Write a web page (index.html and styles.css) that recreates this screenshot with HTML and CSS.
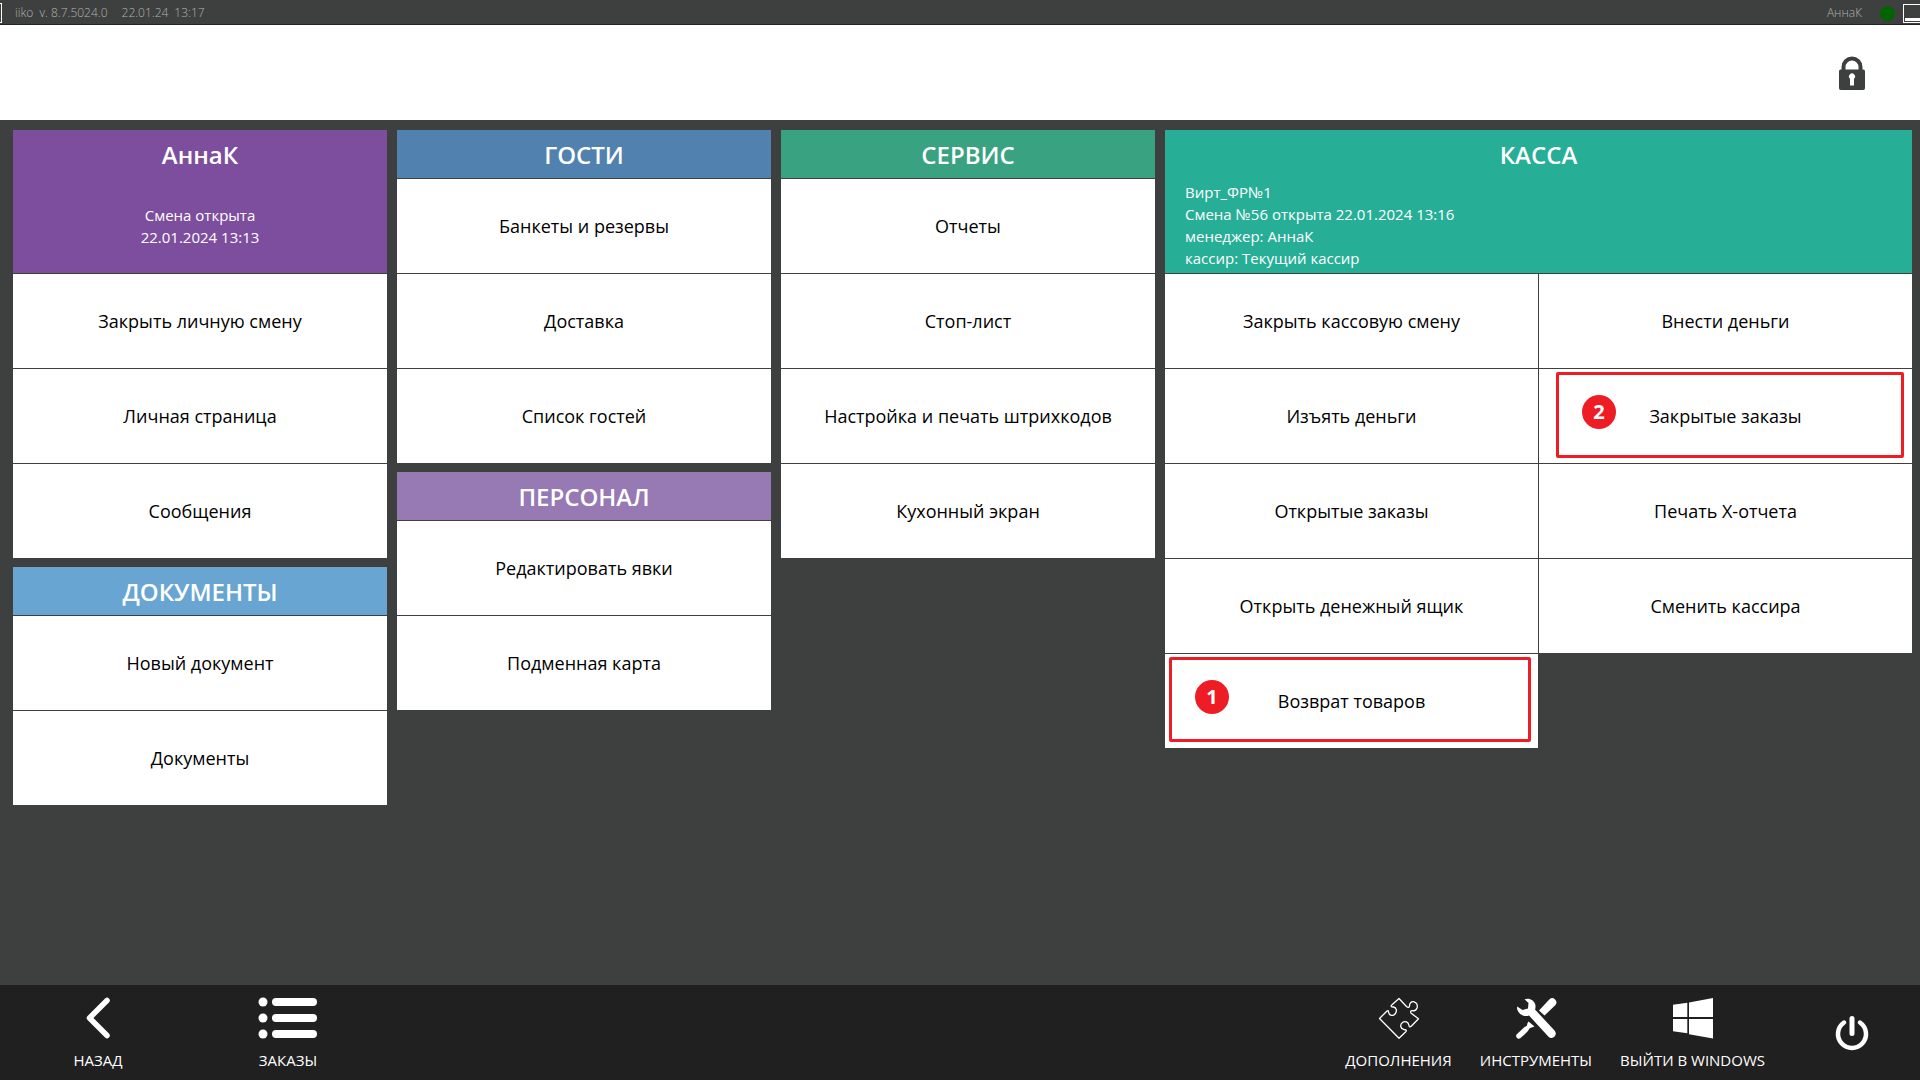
FILE: index.html
```html
<!DOCTYPE html>
<html lang="ru">
<head>
<meta charset="utf-8">
<meta name="viewport" content="width=device-width, initial-scale=1">
<title>iiko</title>
<link rel="stylesheet" href="styles.css">
</head>
<body>
<header class="statusbar">
  <span class="edge-mark"></span>
  <span class="version">iiko&nbsp; v. 8.7.5024.0</span>
  <span class="date">22.01.24</span>
  <span class="time">13:17</span>
  <span class="user">АннаК</span>
  <span class="online-dot"></span>
  <button class="minimize" type="button" aria-label="Свернуть"></button>
</header>
<div class="toolbar">
  <button class="lock" type="button" aria-label="Заблокировать">
    <svg width="26" height="34" viewBox="0 0 26 34" fill="#3e403f" fill-rule="evenodd"><path d="M2.5 13.5V11a10.5 10.5 0 0 1 21 0v2.500h.8a1.700 1.700 0 0 1 1.700 1.700v17.100a1.700 1.700 0 0 1-1.700 1.700H1.700A1.700 1.700 0 0 1 0 32.300V15.200a1.700 1.700 0 0 1 1.700-1.700zM6.500 13.500h13V11a6.500 6.500 0 0 0-13 0zM11 29.500h4v-6.800a3 3 0 1 0-4 0z"/></svg>
  </button>
</div>
<main class="board">
  <div class="column">
    <section class="card">
      <div class="head head-tall violet">
        <h2>АннаК</h2>
        <p class="shift">Смена открыта<br>22.01.2024 13:13</p>
      </div>
      <button type="button">Закрыть личную смену</button>
      <button type="button">Личная страница</button>
      <button type="button">Сообщения</button>
    </section>
    <section class="card">
      <div class="head sky"><h2>ДОКУМЕНТЫ</h2></div>
      <button type="button">Новый документ</button>
      <button type="button">Документы</button>
    </section>
  </div>
  <div class="column">
    <section class="card">
      <div class="head blue"><h2>ГОСТИ</h2></div>
      <button type="button">Банкеты и резервы</button>
      <button type="button">Доставка</button>
      <button type="button">Список гостей</button>
    </section>
    <section class="card">
      <div class="head lilac"><h2>ПЕРСОНАЛ</h2></div>
      <button type="button">Редактировать явки</button>
      <button type="button">Подменная карта</button>
    </section>
  </div>
  <div class="column">
    <section class="card">
      <div class="head green"><h2>СЕРВИС</h2></div>
      <button type="button">Отчеты</button>
      <button type="button">Стоп-лист</button>
      <button type="button">Настройка и печать штрихкодов</button>
      <button type="button">Кухонный экран</button>
    </section>
  </div>
  <div class="column">
    <section class="card card-wide">
      <div class="head head-tall teal">
        <h2>КАССА</h2>
        <p class="register">Вирт_ФР№1<br>Смена №56 открыта 22.01.2024 13:16<br>менеджер: АннаК<br>кассир: Текущий кассир</p>
      </div>
      <button type="button">Закрыть кассовую смену</button>
      <button type="button">Внести деньги</button>
      <button type="button">Изъять деньги</button>
      <button type="button">Закрытые заказы<span class="frame frame-two"><span class="step">2</span></span></button>
      <button type="button">Открытые заказы</button>
      <button type="button">Печать X-отчета</button>
      <button type="button">Открыть денежный ящик</button>
      <button type="button">Сменить кассира</button>
      <button type="button">Возврат товаров<span class="frame frame-one"><span class="step">1</span></span></button>
    </section>
  </div>
</main>
<footer class="dock">
  <button class="dock-left" type="button">
    <svg width="60" height="42" viewBox="0 0 60 42" fill="none" stroke="#fff" stroke-width="5.500" stroke-linecap="round" stroke-linejoin="round"><path d="M39 3.500 21.500 21 39 38.500"/></svg>
    <span>НАЗАД</span>
  </button>
  <button class="dock-left" type="button">
    <svg width="60" height="42" viewBox="0 0 60 42" fill="#fff"><circle cx="5" cy="5" r="4.500"/><circle cx="5" cy="21" r="4.500"/><circle cx="5" cy="37" r="4.500"/><rect x="14" y="1" width="45" height="8" rx="4"/><rect x="14" y="17" width="45" height="8" rx="4"/><rect x="14" y="33" width="45" height="8" rx="4"/></svg>
    <span>ЗАКАЗЫ</span>
  </button>
  <button class="dock-right push" type="button">
    <svg width="42" height="42" viewBox="0 0 42 42" fill="none" stroke="#fff" stroke-width="1.300" stroke-linejoin="round"><path d="M21 1.500 28.500 9.500C30 11 31.500 10.500 31.500 9 31.500 6 33.500 4.300 36 4.800 39 5.500 39.800 8.500 39 11 38 13.500 36 14 34.500 13.600 32.800 13.300 32 15 33.200 16.200L40.500 21.800 33.500 29C32 30.500 31 30 31 28.500 30.500 25 27 23.500 24.500 25.500 21.500 28 22.500 32 26 32.500 28.500 32.700 29 33.500 27.500 35L21 41.200 1.500 21.500 8.500 14.500C10 13 10.500 13.500 10.500 15.200 11 18.500 15 19.500 17 17 19.500 14 18.500 10.500 15.500 10 13 9.800 12.500 9 14 7.800Z"/></svg>
    <span>ДОПОЛНЕНИЯ</span>
  </button>
  <button class="dock-right" type="button">
    <svg width="42" height="42" viewBox="0 0 42 42" fill="#fff"><path d="M24 13.500 34.500 2.200a4.200 4.200 0 0 1 6 5.800L29.500 18.500z"/><path d="M9.500 2.300C14 .5 19 3 20.300 7.500 20.700 9.500 20.500 11.500 20 12.500L39.500 33.500a4.200 4.200 0 0 1-6 6.200L14 18.500C9 20.500 3 17 2 11.500L2.200 9.500 7.500 13 13 11.500 13.500 6z"/><path d="M13.500 24.500 19.500 29.500 16.500 30.500 14.300 31.500C14 33 12 35 9.500 37.500L5.500 41C3.500 43 0 40.500 1.500 37.500L9 30.500C10 29.500 11.300 29.300 12 28.800L12.300 26.500z"/></svg>
    <span>ИНСТРУМЕНТЫ</span>
  </button>
  <button class="dock-right" type="button">
    <svg width="42" height="42" viewBox="0 0 42 42" fill="#fff"><path d="M1 7.800 15.300 5.700V20H1zM17 5.400 41 1v19H17zM1 22h14.300v14.300L1 34.200zM17 22h24v19.500L17 37.200z"/></svg>
    <span>ВЫЙТИ В WINDOWS</span>
  </button>
  <button class="power" type="button" aria-label="Выключить">
    <svg width="34" height="36" viewBox="0 0 34 36" fill="none" stroke="#fff" stroke-linecap="round"><path stroke-width="5" d="M17 3.500V18.500"/><path stroke-width="4.500" d="M9 7.500A14 14 0 1 0 25 7.500"/></svg>
  </button>
</footer>
</body>
</html>
```
FILE: styles.css
```css
* {
  box-sizing: border-box;
}

body {
  margin: 0;
  min-height: 100vh;
  display: flex;
  flex-direction: column;
  background: #3e403f;
  color: #000;
  font-family: "Open Sans", "Noto Sans", sans-serif;
  overflow-x: hidden;
}

button {
  margin: 0;
  padding: 0;
  border: 0;
  background: none;
  color: inherit;
  font: inherit;
  cursor: pointer;
}

/* Status bar */
.statusbar {
  display: flex;
  align-items: center;
  height: 25px;
  padding-top: 2px;
  border-bottom: 1px solid #222;
  color: #b0b0b0;
  font-size: 12px;
  font-weight: 300;
  line-height: 16px;
  white-space: nowrap;
  overflow: hidden;
}

.edge-mark {
  width: 2px;
  height: 20px;
  margin-right: 13px;
  border: 1px solid #fff;
  border-left: 0;
}

.date {
  margin-left: 14px;
}

.time {
  margin-left: 6px;
}

.user {
  margin-left: auto;
}

.online-dot {
  width: 15px;
  height: 15px;
  margin: 0 8px 0 18px;
  border-radius: 50%;
  background: #006400;
}

.minimize {
  width: 17px;
  height: 19px;
  border: 1px solid #fff;
  border-right: 0;
  background: linear-gradient(#fff, #fff) 1px 13px / 15px 3px no-repeat;
}

/* Toolbar */
.toolbar {
  display: flex;
  align-items: center;
  justify-content: flex-end;
  height: 95px;
  padding-right: 55px;
  background: #fff;
}

.lock {
  display: flex;
}

/* Board */
.board {
  flex: 1;
  display: grid;
  grid-template-columns: 374fr 374fr 374fr 747fr;
  gap: 10px;
  align-items: start;
  padding: 10px 8px 10px 13px;
}

.column {
  display: flex;
  flex-direction: column;
  gap: 9px;
}

.card {
  display: grid;
  gap: 1px;
}

.card-wide {
  grid-template-columns: 1fr 1fr;
}

.card button {
  position: relative;
  height: 94px;
  background: #fff;
  font-size: 18px;
  line-height: 24px;
}

.head {
  height: 48px;
  padding-top: 9px;
  color: #fff;
  text-align: center;
}

.head-tall {
  height: 143px;
}

.card-wide .head {
  grid-column: 1 / -1;
}

.head h2 {
  margin: 0;
  font-size: 24px;
  font-weight: 600;
  line-height: 32px;
}

.head p {
  margin: 0;
  font-size: 15px;
  line-height: 22px;
}

.head .shift {
  padding-top: 33px;
}

.head .register {
  padding: 10px 20px 0;
  text-align: left;
}

.violet { background: #7d4e9d; }
.sky { background: #68a5d3; }
.blue { background: #5181ae; }
.lilac { background: #9779b3; }
.green { background: #38a281; }
.teal { background: #27ae96; }

/* Step markers over the buttons */
.frame {
  position: absolute;
  border: 3px solid #ee1c25;
  border-radius: 2px;
}

.frame-one {
  inset: 3px 7px 6px 4px;
}

.frame-two {
  inset: 3px 8px 5px 17px;
}

.step {
  position: absolute;
  top: 20px;
  left: 23px;
  width: 34px;
  height: 34px;
  border-radius: 50%;
  background: #ee1c25;
  color: #fff;
  font-size: 20px;
  font-weight: 700;
  line-height: 34px;
}

/* Bottom dock */
.dock {
  display: flex;
  height: 95px;
  padding-left: 3px;
  background: #202020;
  color: #fff;
  font-size: 15px;
  line-height: 20px;
}

.dock button {
  display: flex;
  flex-direction: column;
  align-items: center;
  gap: 11px;
  padding-top: 12px;
  white-space: nowrap;
}

.dock .dock-left {
  width: 190px;
}

.dock .dock-right {
  margin-right: 28px;
}

.dock .push {
  margin-left: auto;
}

.dock .power {
  justify-content: center;
  padding: 0;
  margin: 0 51px 0 42px;
}
```
